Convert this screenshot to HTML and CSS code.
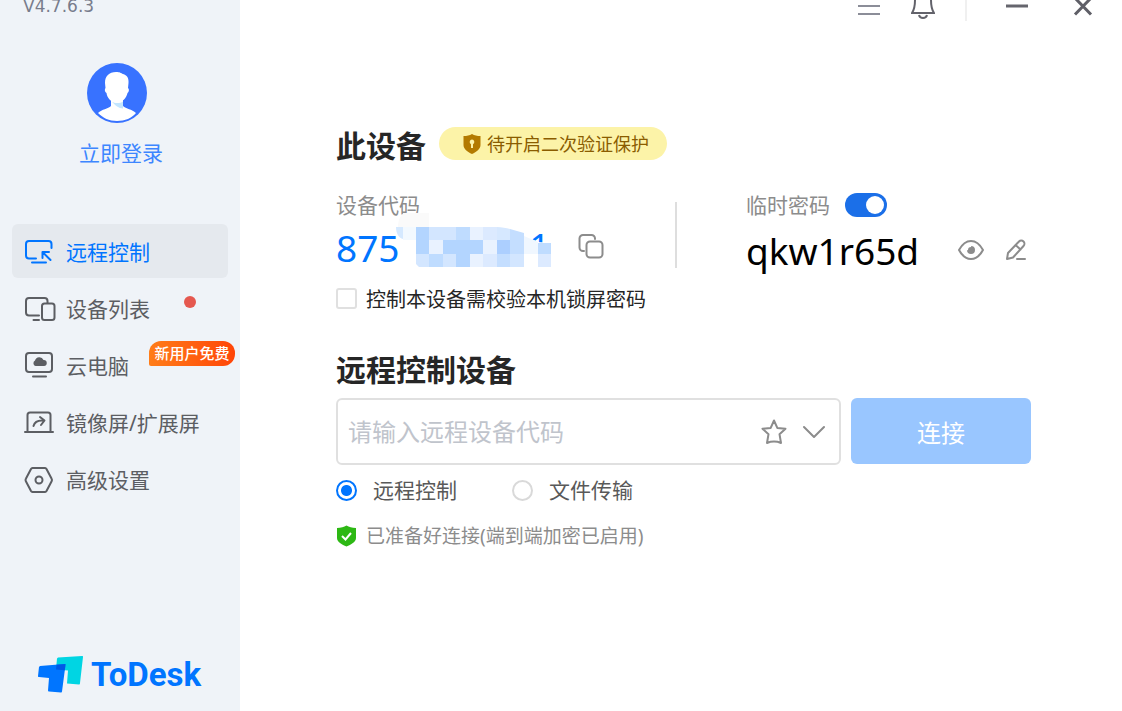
FILE: index.html
```html
<!DOCTYPE html>
<html lang="zh-CN">

<head>
    <meta charset="UTF-8">
    <meta name="viewport" content="width=device-width, initial-scale=1">
    <link rel="stylesheet" href="styles.css">
    <title>ToDesk</title>
</head>

<body>
    <!-- 左侧栏 -->
    <aside class="sidebar">
        <p class="version">V4.7.6.3</p>
        <a class="login" href="#login">
            <svg class="avatar" viewBox="0 0 60 60">
                <circle cx="30" cy="30" r="30" fill="#3872ff" />
                <path fill="#fff" d="M24 35h12v8c3 3 9 3 13 7-4 5-11 8-19 8s-14-3-19-8c4-4 10-4 13-7z" />
                <path fill="#c3e6ff" d="M25 38.500c3 2 8 2 11 0v7c-4 0-8-3-11-7z" />
                <path fill="#fff" d="M29 9c4 0 5 1 7 2 4 1 6 4 5.500 9l-.5 5c1.500 1 1 4-.5 5-1 5-5 9.500-11.500 9.500-5 0-9-5-9.500-9.500-2-1-2-4-1-5l-.5-5c0-7 4-11 11-11z" />
            </svg>
            <span>立即登录</span>
        </a>
        <nav class="menu">
            <a class="menu-item active" href="#remote">
                <svg class="menu-icon" viewBox="0 0 32 32">
                    <path d="M12 23.500H5a3 3 0 0 1-3-3V9a3 3 0 0 1 3-3h19.500a3 3 0 0 1 3 3v4M8 27.500h14M18.500 23v-6H25M19 17.500l7.500 7.500" />
                </svg>
                <span>远程控制</span>
            </a>
            <a class="menu-item" href="#devices">
                <svg class="menu-icon" viewBox="0 0 32 32">
                    <path d="M15 23.500H5a3 3 0 0 1-3-3V9a3 3 0 0 1 3-3h15.500a3 3 0 0 1 3 3v2M9.500 28H15" />
                    <rect x="18" y="11.500" width="12.500" height="16.500" rx="2.500" />
                </svg>
                <span>设备列表</span>
                <i class="dot"></i>
            </a>
            <a class="menu-item" href="#cloud">
                <svg class="menu-icon" viewBox="0 0 32 32">
                    <rect x="2" y="4" width="26" height="19" rx="3" />
                    <path d="M9 27.500h13" />
                    <path fill="currentColor" stroke="none" d="M11.500 17a3 3 0 0 1-.5-5.500 4.500 4.500 0 0 1 8.500-.5 3 3 0 0 1 .5 6z" />
                </svg>
                <span>云电脑</span>
                <b class="badge">新用户免费</b>
            </a>
            <a class="menu-item" href="#mirror">
                <svg class="menu-icon" viewBox="0 0 32 32">
                    <path d="M3.500 25V9a2.500 2.500 0 0 1 2.500-2.500h18A2.500 2.500 0 0 1 26.500 9v16M1 26h28M9.500 20c1-4 4-6 10-5.500M16 11l4.500 3.500-3.500 4.500" />
                </svg>
                <span>镜像屏/扩展屏</span>
            </a>
            <a class="menu-item" href="#settings">
                <svg class="menu-icon" viewBox="0 0 32 32">
                    <path d="M8.500 5h12.500a2 2 0 0 1 1.500 1l5 9.500a3 3 0 0 1 0 3l-5 9.500a2 2 0 0 1-1.500 1H8.500a2 2 0 0 1-1.500-1l-5-9.500a3 3 0 0 1 0-3l5-9.500a2 2 0 0 1 1.500-1z" />
                    <circle cx="15" cy="17" r="3.500" />
                </svg>
                <span>高级设置</span>
            </a>
        </nav>
        <div class="brand">
            <svg class="brand-mark" viewBox="0 0 46 38">
                <path fill="#00d5e3" d="M20 1.500 44 0c1 0 1 .5 1 1l-3 26c0 1-.5 1.500-1 1.500l-12-1 1-13-12-1 1-11z" />
                <path fill="#0075ff" d="M2 10 26.500 8c.5 0 1 0 1 1L24 35.500c0 .5-.5 1-1 1l-12-1c-.5 0-1-.5-1-1l1-12.500-10-1c-1 0-1-.5-1-1l1-9z" />
                <path fill="#0059e6" d="M18.500 8.700 27.500 8l-.7 6.200-8.800-.7z" />
            </svg>
            <strong>ToDesk</strong>
        </div>
    </aside>

    <main class="main">
        <header class="titlebar">
            <button class="win-menu" aria-label="菜单">
                <svg width="22" height="21" viewBox="0 0 22 21"><path stroke="#8b8d98" stroke-width="2" d="M0 6h22M0 14h22" /></svg>
            </button>
            <button class="win-bell" aria-label="通知">
                <svg width="24" height="21" viewBox="0 0 24 21"><path fill="none" stroke="#62626a" stroke-width="2" d="M4 0C4 5 3 10 1 13h22c-2-3-3-8-3-13M8 15c1 4 7 4 8 0" /></svg>
            </button>
            <span class="win-line"></span>
            <button class="win-min" aria-label="最小化">
                <svg width="22" height="21" viewBox="0 0 22 21"><path stroke="#65656d" stroke-width="3" d="M0 6h22" /></svg>
            </button>
            <button class="win-close" aria-label="关闭">
                <svg width="20" height="21" viewBox="0 0 20 21"><path stroke="#5f5f67" stroke-width="3" d="M1-3l17 17.500M19-3L2 14.500" /></svg>
            </button>
        </header>

        <div class="content">
            <!-- 此设备 -->
            <section>
                <div class="title-row">
                    <h2>此设备</h2>
                    <button class="protect">
                        <svg width="18" height="20" viewBox="0 0 18 20">
                            <path fill="#b37a00" d="M9 0c2.500 1.500 5 2 8.500 2v9c0 4-4 7-8.500 9C4.500 18 .5 15 .5 11V2C4 2 6.500 1.500 9 0z" />
                            <path fill="#fcf3a8" d="M9 5.500a2.500 2.500 0 0 1 1 4.700V14H8v-3.800a2.500 2.500 0 0 1 1-4.700z" />
                        </svg>
                        <span>待开启二次验证保护</span>
                    </button>
                </div>
                <div class="device">
                    <div class="device-code">
                        <span class="label">设备代码</span>
                        <div class="value-row">
                            <span class="code">875</span>
                            <!-- 打码区域 -->
                            <svg class="mosaic" width="156" height="62" viewBox="6 8 156 62">
                                <path fill="#fafafa" d="M14 8h25v14H8c0-7 2-11 6-14z" />
                                <text class="masked" x="139" y="55">1</text>
                                <path fill="#fff" d="M107 22c11 1 19 4 27 8l14 7 14 1v32h-55z" />
                                <path fill="#d5e9ff" d="M6 22h7v12c-4-1-7-5-7-12z" />
                                <path fill="#f2f9ff" d="M13 22h13v13H13z" />
                                <path fill="#b3d5ff" d="M26 22h13v13H26zM26 35h13v14H26zM53 35h40v14H53zM66 49h14v13H66z" />
                                <path fill="#d3e6ff" d="M39 22h27v13H39zM26 49h13v13H29l-3-3zM53 49h13v13H53zM120 49h14v13h-14z" />
                                <path fill="#bfdcff" d="M66 22h14v13H66zM39 49h14v13H39zM148 38h13v11h-13z" />
                                <path fill="#e9f2ff" d="M80 22h13v13H80zM39 35h14v14H39zM93 35h14v14H93zM80 49h13v13H80z" />
                                <path fill="#dceaff" d="M93 22h14v13H93zM93 49h14v13H93zM148 49h13v13h-13z" />
                                <path fill="#d6e8ff" d="M107 22c5 0 9 1 13 2v11h-13z" />
                                <path fill="#c4deff" d="M120 24l14 4v21h-14zM107 49h13v13h-13z" />
                                <path fill="#accfff" d="M107 35h13v14h-13z" />
                                <path fill="#f0f7ff" d="M134 31l14 6v12h-14z" />
                            </svg>
                            <button class="copy" aria-label="复制">
                                <svg width="26" height="26" viewBox="0 0 26 26">
                                    <path d="M6 17H5a3.500 3.500 0 0 1-3.500-3.500v-9A3.500 3.500 0 0 1 5 1h8.500A3.500 3.500 0 0 1 17 4.500v.5" />
                                    <rect x="8.500" y="7.500" width="16" height="16" rx="3.500" />
                                </svg>
                            </button>
                        </div>
                    </div>
                    <div class="device-pass">
                        <div class="label-row">
                            <label class="label" for="temp-pass">临时密码</label>
                            <input id="temp-pass" class="switch" type="checkbox" checked>
                        </div>
                        <div class="value-row">
                            <span class="password">qkw1r65d</span>
                            <button class="eye" aria-label="显示密码">
                                <svg width="26" height="20" viewBox="0 0 26 20">
                                    <path d="M1 10c3-5.500 7-9 12-9s9 3.500 12 9c-3 5.500-7 9-12 9s-9-3.500-12-9z" />
                                    <path fill="#8c8c8c" stroke="none" d="M13 6a4 4 0 1 1-4 4 3 3 0 0 0 4-4z" />
                                    <circle cx="13" cy="10" r="3" fill="#8c8c8c" stroke="none" />
                                </svg>
                            </button>
                            <button class="edit" aria-label="修改密码">
                                <svg width="22" height="22" viewBox="0 0 22 22">
                                    <path d="M2 20l1-6L14 2.500a3 3 0 0 1 4.500 4.500L8 18.500zM10.500 6l5 4.500M12 20h8" />
                                </svg>
                            </button>
                        </div>
                    </div>
                </div>
                <label class="lock">
                    <input type="checkbox">
                    <span>控制本设备需校验本机锁屏密码</span>
                </label>
            </section>

            <!-- 远程控制设备 -->
            <section class="remote">
                <h2>远程控制设备</h2>
                <form class="connect">
                    <div class="field">
                        <input type="text" aria-label="远程设备代码" placeholder="请输入远程设备代码">
                        <button type="button" aria-label="收藏">
                            <svg width="26" height="26" viewBox="0 0 26 26">
                                <path d="M13 1.500l3.300 7.400 8.200.8-6 5.500 1.500 8.800c-5-2-9-2-14 0l1.500-8.800-6-5.500 8.200-.8z" />
                            </svg>
                        </button>
                        <button type="button" aria-label="历史设备">
                            <svg width="22" height="14" viewBox="0 0 22 14"><path d="M1 2l10 10L21 2" /></svg>
                        </button>
                    </div>
                    <button class="submit">连接</button>
                </form>
                <div class="modes">
                    <label><input type="radio" name="mode" checked><span>远程控制</span></label>
                    <label><input type="radio" name="mode"><span>文件传输</span></label>
                </div>
                <p class="status">
                    <svg width="21" height="22" viewBox="0 0 21 22">
                        <path fill="#2db814" d="M10.500.5C13 2 16 3 20 3v10c0 4-5 6.500-9.500 8.500C6 19.500 1 17 1 13V3c4 0 7-1 9.500-2.500z" />
                        <path fill="none" stroke="#fff" stroke-width="2" d="M6 11l3.500 3.500L15 8" />
                    </svg>
                    <span>已准备好连接(端到端加密已启用)</span>
                </p>
            </section>
        </div>
    </main>
</body>

</html>
```
FILE: styles.css
```css
* {
    box-sizing: border-box;
}

body {
    margin: 0;
    min-height: 100vh;
    display: flex;
    font-family: "Noto Sans", "Noto Sans CJK SC", sans-serif;
    color: #595959;
    background-color: #fff;
}

h2,
p {
    margin: 0;
}

a {
    text-decoration: none;
}

button,
input {
    font-family: inherit;
}

button {
    padding: 0;
    border: none;
    background: none;
    cursor: pointer;
}

svg {
    display: block;
    flex-shrink: 0;
}

/* 左侧栏 */
.sidebar {
    width: 240px;
    flex-shrink: 0;
    display: flex;
    flex-direction: column;
    background-color: #eff3f8;
}

.version {
    padding-left: 23px;
    font-family: "DejaVu Sans", sans-serif;
    font-size: 17px;
    line-height: 12px;
    color: #787c8c;
}

.login {
    margin-top: 51px;
    padding-left: 79px;
    font-size: 21px;
    line-height: 30px;
    color: #3d86ff;
}

.avatar {
    width: 60px;
    height: 60px;
    margin: 0 0 15px 8px;
}

.menu {
    display: flex;
    flex-direction: column;
    gap: 3px;
    margin-top: 56px;
    padding: 0 12px;
}

.menu-item {
    position: relative;
    display: flex;
    align-items: center;
    gap: 10px;
    height: 54px;
    padding-left: 12px;
    border-radius: 6px;
    font-size: 21px;
    color: #5c5e63;
}

.menu-item.active {
    color: #0075ff;
    background-color: #e5e9ee;
}

.menu-icon {
    width: 32px;
    height: 32px;
    fill: none;
    stroke: currentColor;
    stroke-width: 2;
    stroke-linecap: round;
    stroke-linejoin: round;
}

.dot {
    position: absolute;
    top: 15px;
    left: 172px;
    width: 12px;
    height: 12px;
    border-radius: 50%;
    background-color: #e5584f;
}

.badge {
    position: absolute;
    top: 3px;
    left: 137px;
    width: 86px;
    height: 25px;
    border-radius: 12px 12px 12px 2px;
    font-size: 15px;
    font-weight: 500;
    line-height: 25px;
    text-align: center;
    color: #fff;
    background: linear-gradient(90deg, #ff7d19, #ff4508);
}

.brand {
    display: flex;
    align-items: center;
    gap: 7px;
    margin-top: auto;
    padding: 0 0 17px 38px;
}

.brand-mark {
    width: 46px;
    height: 38px;
}

.brand strong {
    font-family: Roboto, sans-serif;
    font-size: 33px;
    line-height: 38px;
    color: #0075ff;
}

/* 右侧内容 */
.main {
    flex: 1;
    min-width: 0;
}

.titlebar {
    display: flex;
    justify-content: flex-end;
    height: 21px;
    padding-right: 29px;
}

.win-bell {
    margin-left: 31px;
}

.win-line {
    width: 2px;
    margin-left: 30px;
    background-color: #f0f0f0;
}

.win-min {
    margin-left: 39px;
}

.win-close {
    margin-left: 45px;
}

.content {
    padding: 106px 91px 40px 96px;
}

.content h2 {
    font-size: 30px;
    line-height: 37px;
    color: #262626;
}

.title-row {
    display: flex;
    align-items: flex-start;
    gap: 13px;
}

.protect {
    display: flex;
    align-items: center;
    gap: 6px;
    height: 33px;
    padding: 0 18px 0 24px;
    border-radius: 17px;
    font-size: 18px;
    line-height: 24px;
    color: #8a5c00;
    background-color: #fcf3a8;
}

.device {
    display: flex;
    margin-top: 28px;
}

.device-code {
    position: relative;
    flex: 0 1 410px;
}

/* 中间分隔线 */
.device-code::after {
    content: "";
    position: absolute;
    top: 10px;
    right: 69px;
    width: 2px;
    height: 66px;
    background-color: #dedede;
}

.label {
    display: block;
    font-size: 21px;
    line-height: 27px;
    color: #8c8c8c;
}

.label-row {
    display: flex;
    align-items: center;
    gap: 15px;
    height: 26px;
}

.value-row {
    position: relative;
    display: flex;
    align-items: center;
    height: 56px;
}

.device-pass .value-row {
    height: 64px;
}

.code {
    width: 242px;
    font-size: 37px;
    color: #0075ff;
}

.mosaic {
    position: absolute;
    top: -6px;
    left: 60px;
}

.masked {
    font-size: 37px;
    fill: #0075ff;
}

.copy svg,
.eye svg,
.edit svg,
.field svg {
    fill: none;
    stroke: #8c8c8c;
    stroke-width: 2;
    stroke-linecap: round;
    stroke-linejoin: round;
}

.password {
    width: 212px;
    font-size: 37px;
    color: #000;
}

.edit {
    margin-left: 21px;
}

.switch {
    appearance: none;
    width: 42px;
    height: 24px;
    margin: 0;
    padding: 3px;
    border-radius: 12px;
    background-color: #bfbfbf;
    cursor: pointer;
}

.switch::before {
    content: "";
    display: block;
    width: 18px;
    height: 18px;
    border-radius: 50%;
    background-color: #fff;
}

.switch:checked {
    background-color: #1b6fe8;
}

.switch:checked::before {
    margin-left: auto;
}

.lock {
    display: flex;
    align-items: center;
    gap: 9px;
    height: 30px;
    margin-top: 1px;
    font-size: 20px;
    color: #262626;
}

.lock input {
    appearance: none;
    width: 21px;
    height: 21px;
    margin: 0;
    border: 2px solid #e0e0e0;
    border-radius: 3px;
}

.lock input:checked {
    border-color: #0075ff;
    background-color: #0075ff;
}

/* 远程控制设备 */
.remote {
    margin-top: 38px;
}

.connect {
    display: flex;
    gap: 10px;
    margin-top: 10px;
}

.field {
    flex: 1;
    min-width: 0;
    display: flex;
    align-items: center;
    gap: 16px;
    height: 67px;
    padding: 0 14px 0 10px;
    border: 2px solid #e0e0e0;
    border-radius: 6px;
}

.field input {
    flex: 1;
    min-width: 0;
    padding: 0;
    border: none;
    outline: none;
    font-size: 24px;
    color: #262626;
}

.field input::placeholder {
    color: #c0c4cc;
}

.submit {
    width: 180px;
    height: 66px;
    border-radius: 6px;
    font-size: 24px;
    color: #fff;
    background-color: #99c6ff;
}

.modes {
    display: flex;
    gap: 55px;
    margin-top: 10px;
    font-size: 21px;
    line-height: 30px;
}

.modes label {
    display: flex;
    align-items: center;
    gap: 16px;
}

.modes input {
    appearance: none;
    width: 21px;
    height: 21px;
    margin: 0;
    border: 2px solid #d9d9d9;
    border-radius: 50%;
}

.modes input:checked {
    border-color: #0075ff;
    background: radial-gradient(circle, #0075ff 5px, #fff 6px);
}

.status {
    display: flex;
    align-items: center;
    gap: 9px;
    margin-top: 16px;
    font-size: 19px;
    line-height: 30px;
    color: #8c8c8c;
}
```
